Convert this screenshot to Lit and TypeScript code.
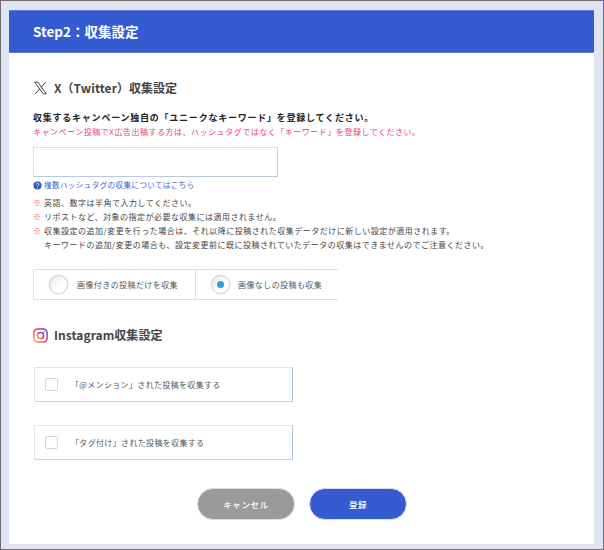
import { LitElement, html, css } from "lit";
import { customElement } from "lit/decorators.js";

@customElement("app-root")
export class AppRoot extends LitElement {
  static styles = css`
    :host {
      display: block;
      width: 604px;
      height: 550px;
      box-sizing: border-box;
      overflow: hidden;
      background: #e1e4f2;
      border: 1px solid #6f6f6f;
      padding: 9px 9px 5px 8px;
      font-family: "Noto Sans CJK JP", "Noto Sans", sans-serif;
      color: #333;
    }
    .card { background: #fff; height: 534px; }
    .head {
      height: 43px;
      box-sizing: border-box;
      background: #355bd0;
      border-top: 1px solid #5f7edc;
      border-bottom: 1px solid #5f7edc;
      color: #fff;
      font-size: 13.5px;
      font-weight: 700;
      padding: 0 0 2px 24px;
      display: flex;
      align-items: center;
    }
    .body { padding: 26px 0 0 24px; }
    h2 {
      margin: 0;
      display: flex;
      align-items: center;
      gap: 6px;
      font-size: 12px;
      line-height: 18px;
      font-weight: 700;
      color: #444;
      letter-spacing: .05px;
    }
    .lead { margin-top: 14px; font-size: 9px; letter-spacing: .77px; line-height: 14px; font-weight: 700; color: #222; }
    .warn { font-size: 8px; letter-spacing: .52px; line-height: 14px; color: #f0417c; }
    .field {
      display: block;
      margin-top: 8px;
      width: 245px;
      height: 30px;
      box-sizing: border-box;
      border: 1px solid #d7e0ee;
      border-right: 1px solid #b9c9e0;
      border-bottom: 1px solid #b9c9e0;
      background: #fff;
      padding: 0 6px;
      outline: none;
    }
    .help { margin-top: 1px; display: flex; align-items: center; gap: 2px; font-size: 7.5px; letter-spacing: .45px; line-height: 14px; color: #3b5fd0; }
    .notes { margin: 4px 0 0; padding: 0; list-style: none; font-size: 8px; letter-spacing: .5px; line-height: 14px; color: #444; }
    .notes li { display: flex; gap: 3px; }
    .notes .m { color: #f0417c; width: 8px; flex: none; }
    .radios {
      margin-top: 17px;
      width: 305px;
      height: 31px;
      box-sizing: border-box;
      display: flex;
      border: 1px solid #dedede;
      border-right: none;
    }
    .radio { display: flex; align-items: center; font-size: 8px; letter-spacing: .42px; color: #555; }
    .radio.a { width: 162px; padding-left: 15px; box-sizing: border-box; border-right: 1px solid #dedede; gap: 9px; }
    .radio.b { padding-left: 15px; gap: 8px; }
    .dot {
      width: 19px;
      height: 19px;
      box-sizing: border-box;
      border-radius: 50%;
      border: 1px solid #d5d5d5;
      background: linear-gradient(135deg, #e6e6e6, #fff 60%);
      box-shadow: 0 0 0 .5px #ddd;
      display: flex;
      align-items: center;
      justify-content: center;
    }
    .dot i { width: 7px; height: 7px; border-radius: 50%; background: #3f97d8; }
    .ig { margin-top: 26px; }
    .checks { margin-top: 23px; display: flex; flex-direction: column; gap: 23px; }
    .check {
      margin-left: 1px;
      width: 259px;
      height: 35px;
      box-sizing: border-box;
      display: flex;
      align-items: center;
      gap: 13px;
      padding: 0 0 1px 10px;
      border: 1px solid #dfe6f2;
      border-right: 1px solid #a9bfe0;
      border-bottom: 1px solid #c6d4e8;
      font-size: 8px;
      letter-spacing: .34px;
      color: #555;
    }
    .box { width: 13px; height: 13px; box-sizing: border-box; border: 1px solid #cdd8ea; border-radius: 2px; background: #fff; }
    .actions { margin: 28px 0 0 164px; display: flex; gap: 14px; }
    button {
      width: 98px;
      height: 32px;
      border-radius: 16px;
      border: 1px solid #dcdff0;
      color: #fff;
      font: 500 8.5px "Noto Sans CJK JP", sans-serif;
      letter-spacing: .6px;
      padding: 0;
    }
    .cancel { background: #9a9a9a; }
    .ok { background: #355bd0; }
  `;

  render() {
    return html`
      <div class="card">
        <div class="head">Step2：収集設定</div>
        <div class="body">
          <h2>
            <svg width="15" height="14" viewBox="0 0 24 24" fill="none" stroke="#333" stroke-width="1.6">
              <path d="M2 2h5.500L22 22h-5.500z" />
              <path d="M21 2l-7.800 9M10.800 13.300L3 22" />
            </svg>
            X（Twitter）収集設定
          </h2>
          <div class="lead">収集するキャンペーン独自の「ユニークなキーワード」を登録してください。</div>
          <div class="warn">キャンペーン投稿でX広告出稿する方は、ハッシュタグではなく「キーワード」を登録してください。</div>
          <input class="field" type="text" />
          <div class="help">
            <svg width="9" height="9" viewBox="0 0 10 10">
              <circle cx="5" cy="5" r="4.500" fill="#2f55b8" />
              <path d="M3.500 3.900a1.500 1.400 0 1 1 2.300 1.200c-.6.4-.8.6-.8 1.100" fill="none" stroke="#fff" stroke-width="1" />
              <circle cx="5" cy="7.700" r=".6" fill="#fff" />
            </svg>
            複数ハッシュタグの収集についてはこちら
          </div>
          <ul class="notes">
            <li><span class="m">※</span><span>英語、数字は半角で入力してください。</span></li>
            <li><span class="m">※</span><span>リポストなど、対象の指定が必要な収集には適用されません。</span></li>
            <li><span class="m">※</span><span>収集設定の追加/変更を行った場合は、それ以降に投稿された収集データだけに新しい設定が適用されます。<br />キーワードの追加/変更の場合も、設定変更前に既に投稿されていたデータの収集はできませんのでご注意ください。</span></li>
          </ul>
          <div class="radios">
            <div class="radio a"><span class="dot"></span>画像付きの投稿だけを収集</div>
            <div class="radio b"><span class="dot"><i></i></span>画像なしの投稿も収集</div>
          </div>
          <h2 class="ig">
            <svg width="15" height="15" viewBox="0 0 24 24" fill="none" stroke-width="2.400">
              <defs>
                <linearGradient id="g" x1="0" y1="1" x2="1" y2="0">
                  <stop offset="0" stop-color="#fdb44a" />
                  <stop offset=".5" stop-color="#ee2f74" />
                  <stop offset="1" stop-color="#5b4fd0" />
                </linearGradient>
              </defs>
              <rect x="1.500" y="1.500" width="21" height="21" rx="6" stroke="url(#g)" />
              <circle cx="12" cy="12" r="5" stroke="url(#g)" />
              <circle cx="18" cy="6" r="1.300" fill="#a93bb0" stroke="none" />
            </svg>
            Instagram収集設定
          </h2>
          <div class="checks">
            <div class="check"><span class="box"></span>「@メンション」された投稿を収集する</div>
            <div class="check"><span class="box"></span>「タグ付け」された投稿を収集する</div>
          </div>
          <div class="actions">
            <button class="cancel">キャンセル</button>
            <button class="ok">登録</button>
          </div>
        </div>
      </div>
    `;
  }
}
